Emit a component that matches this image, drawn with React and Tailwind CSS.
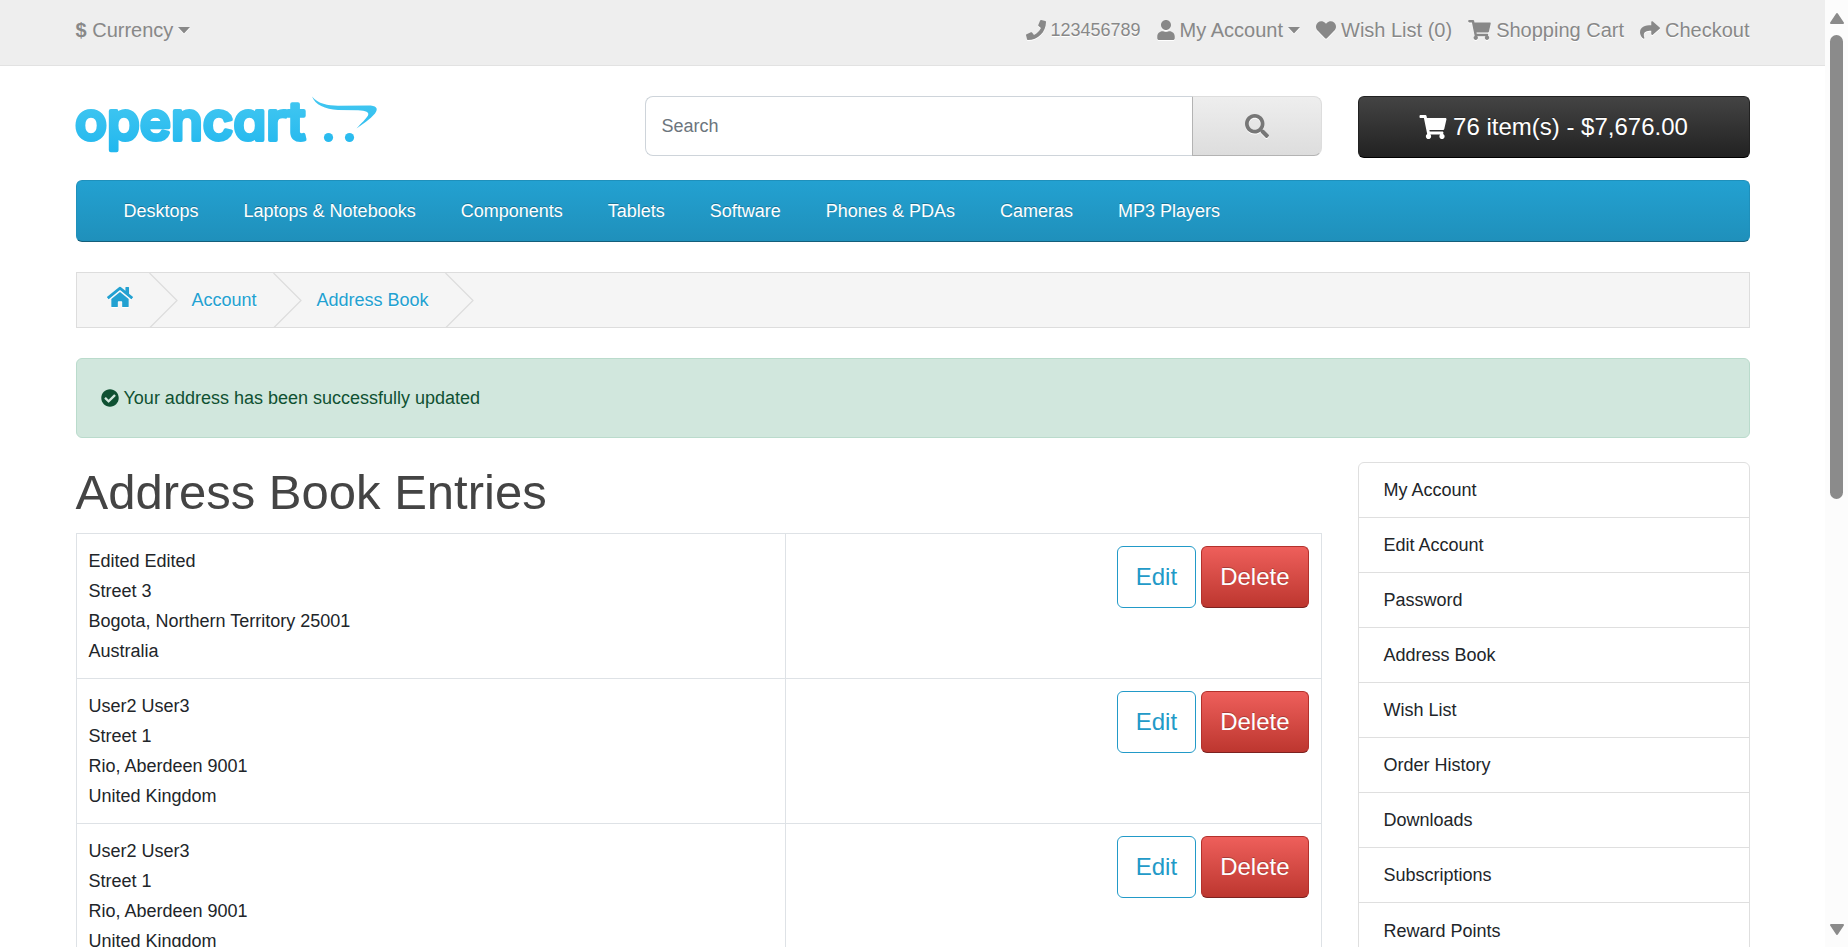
import React from "react";
import { FaPhone, FaUser, FaHeart, FaShoppingCart, FaShare, FaSearch, FaHome, FaCheckCircle } from "react-icons/fa";

const categories = ["Desktops", "Laptops & Notebooks", "Components", "Tablets", "Software", "Phones & PDAs", "Cameras", "MP3 Players"];

const addresses = [
  ["Edited Edited", "Street 3", "Bogota, Northern Territory 25001", "Australia"],
  ["User2 User3", "Street 1", "Rio, Aberdeen 9001", "United Kingdom"],
  ["User2 User3", "Street 1", "Rio, Aberdeen 9001", "United Kingdom"],
];

const accountLinks = [
  "My Account", "Edit Account", "Password", "Address Book", "Wish List",
  "Order History", "Downloads", "Subscriptions", "Reward Points",
];

function Caret() {
  return (
    <svg viewBox="0 0 12 7" className="h-[7px] w-3 drop-shadow-[0_1px_0_#fff]" aria-hidden="true">
      <path d="M0 0h12L6 6.6z" fill="currentColor" />
    </svg>
  );
}

function TopBar() {
  return (
    <header className="border-b border-[#e2e2e2] bg-[#eee] text-[#888] [text-shadow:0_1px_0_#fff]">
      <div className="mx-auto flex h-[65px] max-w-[1674px] items-center justify-between pb-[5px] text-xl leading-[30px]">
        <button type="button" className="flex items-center gap-[5px]">
          <span><strong>$</strong> Currency</span>
          <Caret />
        </button>
        <nav aria-label="Account" className="flex items-center gap-4">
          <a href="#contact" className="flex items-center gap-[5px] text-lg">
            <FaPhone className="size-5 drop-shadow-[0_1px_0_#fff]" />
            123456789
          </a>
          <button type="button" className="flex items-center gap-[5px]">
            <FaUser className="h-5 w-[18px] drop-shadow-[0_1px_0_#fff]" />
            My Account
            <Caret />
          </button>
          <a href="#wishlist" className="flex items-center gap-[5px]">
            <FaHeart className="size-5 drop-shadow-[0_1px_0_#fff]" />
            Wish List (0)
          </a>
          <a href="#cart" className="flex items-center gap-[5px]">
            <FaShoppingCart className="h-5 w-[23px] drop-shadow-[0_1px_0_#fff]" />
            Shopping Cart
          </a>
          <a href="#checkout" className="flex items-center gap-[5px]">
            <FaShare className="size-5 drop-shadow-[0_1px_0_#fff]" />
            Checkout
          </a>
        </nav>
      </div>
    </header>
  );
}

function Logo() {
  return (
    <a href="#home" aria-label="opencart">
      <svg viewBox="0 0 304 60" className="h-[60px] w-[304px] overflow-visible" aria-hidden="true">
        <defs>
          <linearGradient id="logoFill" gradientUnits="userSpaceOnUse" x1="0" y1="0" x2="0" y2="60">
            <stop offset="0" stopColor="#44c8f1" />
            <stop offset="1" stopColor="#1fb6ee" />
          </linearGradient>
        </defs>
        <g fill="url(#logoFill)">
          <text
            x="-1" y="44" fontSize="53" stroke="url(#logoFill)" strokeWidth="4" strokeLinejoin="round"
            className="font-['Inter',sans-serif] font-medium [font-feature-settings:'cv11'_1]"
          >
            opencart
          </text>
          <path d="M236 .5C242 8 252 9.500 262 9.800L292 9.500C300 9.500 303 12 299 17.500C294 23.500 287 28 280.500 32.500C285 27.500 290 23 292 19.500C293.500 16 290 14.800 282 14.300L262 14C249 13.500 239 8.500 236 .5Z" />
          <circle cx="252.500" cy="41.500" r="4.600" />
          <circle cx="273.500" cy="41.500" r="4.600" />
        </g>
      </svg>
    </a>
  );
}

function Separator() {
  return (
    <svg viewBox="0 0 29 55" className="h-[55px] w-[29px] shrink-0" fill="none" stroke="#dddddd" strokeWidth="1.200" aria-hidden="true">
      <path d="M.5 0L28 27.500L.5 55" />
    </svg>
  );
}

function Breadcrumb() {
  return (
    <nav aria-label="Breadcrumb" className="mt-[30px] border border-[#ddd] bg-[#f5f5f5] text-lg text-[#23a1d1] [text-shadow:0_1px_0_#fff]">
      <ol className="flex h-[54px] items-center">
        <li className="flex items-center">
          <a href="#home" aria-label="Home" className="pr-4 pb-[6px] pl-[30px]">
            <FaHome className="h-6 w-[26px] drop-shadow-[0_1px_0_#fff]" />
          </a>
          <Separator />
        </li>
        <li className="flex items-center">
          <a href="#account" className="pr-4 pl-[14px]">Account</a>
          <Separator />
        </li>
        <li className="flex items-center">
          <a href="#address" className="pr-4 pl-[15px]">Address Book</a>
          <Separator />
        </li>
      </ol>
    </nav>
  );
}

function AddressTable() {
  return (
    <table className="mt-[11px] w-full border-collapse border border-[#dee2e6] text-lg leading-[30px]">
      <tbody>
        {addresses.map((lines, i) => (
          <tr key={i}>
            <td className="w-[57%] border border-[#dee2e6] p-3 align-top">
              {lines.map((line) => (
                <div key={line}>{line}</div>
              ))}
            </td>
            <td className="border border-[#dee2e6] p-3 align-top">
              <div className="flex justify-end gap-[5px] text-2xl">
                <a href="#edit" className="flex h-[62px] items-center rounded-md border border-[#229ac8] px-[18px] text-[#229ac8]">
                  Edit
                </a>
                <button type="button" className="h-[62px] rounded-md border border-[#b3312c] border-b-[#7c2220] bg-linear-to-b from-[#ee5f5b] to-[#bd362f] px-[18px] text-white [text-shadow:0_-1px_0_rgba(0,0,0,0.25)]">
                  Delete
                </button>
              </div>
            </td>
          </tr>
        ))}
      </tbody>
    </table>
  );
}

function Scrollbar() {
  return (
    <div className="flex w-[23px] shrink-0 flex-col items-center bg-[#fcfcfc]" aria-hidden="true">
      <svg viewBox="0 0 14 12" className="mt-3 h-3 w-[14px]">
        <path d="M7 2L13 11H1z" fill="#8b8b8b" stroke="#8b8b8b" strokeWidth="2" strokeLinejoin="round" />
      </svg>
      <div className="mt-[11px] h-[49%] w-[13px] rounded-full bg-[#8b8b8b]" />
      <svg viewBox="0 0 14 12" className="mt-auto mb-[11px] h-3 w-[14px]">
        <path d="M7 10L1 1H13z" fill="#8b8b8b" stroke="#8b8b8b" strokeWidth="2" strokeLinejoin="round" />
      </svg>
    </div>
  );
}

export default function App() {
  return (
    <div className="flex h-screen overflow-hidden bg-white font-['Liberation_Sans',Arial,sans-serif] text-[#212529]">
      <div className="min-w-0 flex-1">
        <TopBar />
        <div className="mx-auto max-w-[1674px]">
          <div className="mt-[30px] flex items-start gap-9">
            <div className="min-w-0 flex-1">
              <Logo />
            </div>
            <form className="flex h-[60px] w-[677px]" onSubmit={(e) => e.preventDefault()}>
              <input
                type="text"
                aria-label="Search"
                placeholder="Search"
                className="min-w-0 flex-1 rounded-l-lg border border-r-0 border-[#ced4da] px-4 text-lg placeholder:text-[#6c757d]"
              />
              <button
                type="submit"
                aria-label="Search"
                className="flex w-[130px] items-center justify-center rounded-r-lg border border-[#ddd] border-b-[#b3b3b3] border-l-[#b3b3b3] bg-linear-to-b from-[#eee] to-[#ddd] text-[#777]"
              >
                <FaSearch className="size-6 drop-shadow-[0_1px_0_#fff]" />
              </button>
            </form>
            <button
              type="button"
              className="flex h-[62px] w-[392px] items-center justify-center gap-[6px] rounded-md border border-[#222] border-b-black bg-linear-to-b from-[#444] to-[#222] text-2xl text-white [text-shadow:0_-1px_0_rgba(0,0,0,0.25)]"
            >
              <FaShoppingCart className="h-6 w-[28px]" />
              76 item(s) - $7,676.00
            </button>
          </div>

          <nav aria-label="Categories" className="mt-[22px] flex h-[62px] items-center gap-[45px] rounded-md border border-[#1f90bb] border-b-[#145e7a] bg-linear-to-b from-[#23a1d1] to-[#1f90bb] px-[47px] text-lg text-white [text-shadow:0_-1px_0_rgba(0,0,0,0.25)]">
            {categories.map((name) => (
              <a key={name} href="#category">{name}</a>
            ))}
          </nav>

          <Breadcrumb />

          <div role="status" className="mt-[30px] flex h-20 items-center gap-[5px] rounded-md border border-[#badbcc] bg-[#d1e7dd] px-6 text-lg text-[#0f5132]">
            <FaCheckCircle className="size-[18px]" />
            Your address has been successfully updated
          </div>

          <div className="mt-6 flex items-start gap-9">
            <main className="min-w-0 flex-1">
              <h1 className="text-[49px] leading-[60px] text-[#444]">Address Book Entries</h1>
              <AddressTable />
            </main>
            <aside className="w-[392px] rounded-md border border-[#dfdfdf] text-lg">
              {accountLinks.map((name) => (
                <a key={name} href="#link" className="flex h-[55px] items-center border-b border-[#dfdfdf] px-[25px] last:border-b-0">
                  {name}
                </a>
              ))}
            </aside>
          </div>
        </div>
      </div>
      <Scrollbar />
    </div>
  );
}
